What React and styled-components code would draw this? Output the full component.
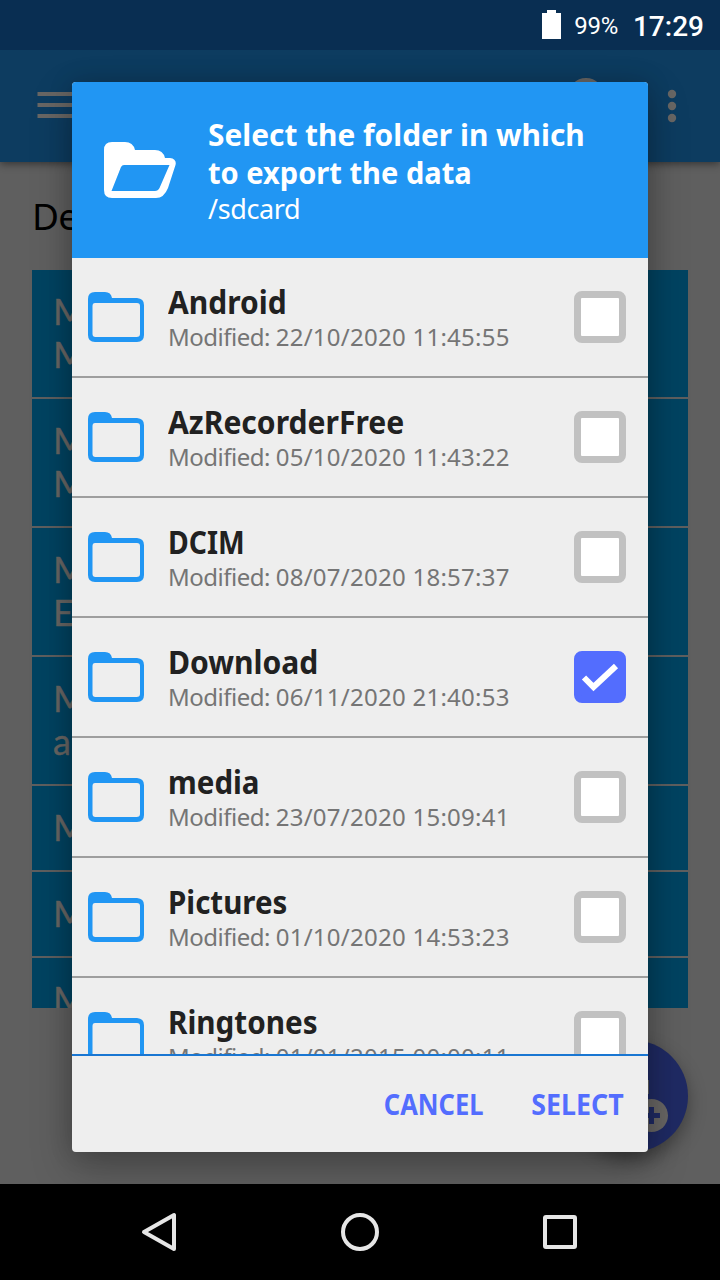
import React from 'react';
import styled, { createGlobalStyle } from 'styled-components';

const GlobalStyle = createGlobalStyle`
  * { box-sizing: border-box; }
  body { margin: 0; background: #000; }
`;

const Screen = styled.div`
  position: relative;
  display: flex;
  flex-direction: column;
  width: 720px;
  height: 1280px;
  overflow: hidden;
  background: #5f5f5f;
  font-family: 'Noto Sans', 'Open Sans', sans-serif;
`;

const StatusBar = styled.header`
  position: relative;
  display: flex;
  flex: none;
  align-items: center;
  justify-content: flex-end;
  height: 50px;
  padding: 2px 16px 0 0;
  background: #092e52;
  color: #fff;
  font-family: Roboto, sans-serif;
`;

const BatteryIcon = styled.svg`
  margin: -3px 13px 0 0;
`;

const BatteryLevel = styled.span`
  margin-right: 15px;
  font-size: 24px;
  letter-spacing: -0.3px;
`;

const Clock = styled.span`
  font-size: 28px;
  font-weight: 500;
`;

const AppBar = styled.div`
  display: flex;
  flex: none;
  align-items: center;
  height: 112px;
  padding: 0 43px 0 37px;
  background: #0d3c60;
  box-shadow: 0 2px 8px rgba(0, 0, 0, 0.45);
`;

const MenuIcon = styled.svg`
  margin-bottom: 2px;
`;

const SearchIcon = styled.svg`
  margin-left: auto;
  margin-right: 63px;
`;

const Page = styled.main`
  flex: 1;
  min-height: 0;
  padding: 30px 32px 0;
`;

const PageTitle = styled.h1`
  height: 78px;
  margin: 0;
  color: #000;
  font-size: 37px;
  font-weight: 400;
  line-height: 47px;
  letter-spacing: -0.8px;
`;

const EntryList = styled.div`
  height: 738px;
  overflow: hidden;
  background: #004361;
`;

const Entry = styled.div`
  padding: 20px 20px 21px 21px;
  border-bottom: 2px solid #5f5f5f;
  color: #686664;
  font-family: Lato, 'Noto Sans', sans-serif;
  font-size: 36px;
  line-height: 43px;
  -webkit-text-stroke: 0.4px #686664;
`;

const Line = styled.div`
  height: 43px;
`;

const Fab = styled.div`
  position: absolute;
  right: 32px;
  bottom: 128px;
  width: 112px;
  height: 112px;
  border-radius: 50%;
  background: #1f2a63;
  box-shadow: 0 8px 18px rgba(0, 0, 0, 0.35);
`;

const NavBar = styled.nav`
  position: relative;
  display: flex;
  flex: none;
  align-items: center;
  justify-content: space-between;
  height: 96px;
  padding: 0 140px;
  background: #000;
`;

const Dialog = styled.section`
  position: absolute;
  top: 82px;
  left: 72px;
  display: flex;
  flex-direction: column;
  width: 576px;
  height: 1070px;
  overflow: hidden;
  border-radius: 4px;
  background: #eee;
`;

const DialogShadow = styled.div`
  position: absolute;
  top: 82px;
  left: 72px;
  width: 576px;
  height: 1070px;
  border-radius: 4px;
  box-shadow: 0 16px 40px rgba(0, 0, 0, 0.26), 0 0 24px rgba(0, 0, 0, 0.16);
`;

const DialogHeader = styled.div`
  display: flex;
  flex: none;
  height: 176px;
  padding: 33px 32px 0;
  background: #2196f3;
  color: #fff;
`;

const OpenFolder = styled.svg`
  flex: none;
  margin: 27px 32px 0 0;
`;

const DialogTitle = styled.h2`
  margin: 0;
  font-size: 31px;
  font-weight: 700;
  line-height: 38px;
  white-space: nowrap;
`;

const TitleLine = styled.span`
  display: block;
  transform: scaleX(${(p) => p.$stretch});
  transform-origin: left;
`;

const Path = styled.div`
  font-size: 27px;
  line-height: 36px;
  letter-spacing: -0.4px;
`;

const FolderList = styled.div`
  flex: none;
  height: 796px;
  overflow: hidden;
`;

const FolderRow = styled.div`
  display: flex;
  align-items: center;
  height: 120px;
  padding: 0 22px 0 16px;
  border-bottom: 2px solid #9e9e9e;
`;

const FolderText = styled.div`
  flex: 1;
  padding-top: 2px;
  margin-left: 24px;
  white-space: nowrap;
`;

const FolderName = styled.div`
  color: #212121;
  font-size: 32px;
  font-weight: 700;
  line-height: 38px;
  transform: scaleX(${(p) => p.$stretch});
  transform-origin: left;
`;

const Modified = styled.div`
  color: #757575;
  font-size: 24px;
  line-height: 32px;
`;

const ModifiedLabel = styled.span`
  letter-spacing: -0.5px;
`;

const ModifiedDate = styled.span`
  letter-spacing: 0.26px;
`;

const Checkbox = styled.span`
  display: grid;
  flex: none;
  place-items: center;
  width: 52px;
  height: 52px;
  border: 7px solid ${(p) => (p.$checked ? '#536dfe' : '#c1c1c1')};
  border-radius: 8px;
  background: ${(p) => (p.$checked ? '#536dfe' : '#fff')};
`;

const DialogFooter = styled.footer`
  display: flex;
  flex: none;
  align-items: center;
  justify-content: flex-end;
  gap: 44px;
  height: 98px;
  padding-right: 24px;
  border-top: 2px solid #1976d2;
`;

const TextButton = styled.button`
  padding: 0;
  border: 0;
  background: none;
  color: #536dfe;
  font: 700 28px 'Noto Sans', sans-serif;
  transform: scaleX(${(p) => p.$stretch});
  transform-origin: right;
`;

const entries = [['M', 'M'], ['M', 'M'], ['M', 'E'], ['M', 'a'], ['M'], ['M'], ['M']];

const folders = [
  { name: 'Android', date: '22/10/2020 11:45:55', stretch: 0.937 },
  { name: 'AzRecorderFree', date: '05/10/2020 11:43:22', stretch: 0.94 },
  { name: 'DCIM', date: '08/07/2020 18:57:37', stretch: 0.885 },
  { name: 'Download', date: '06/11/2020 21:40:53', checked: true, stretch: 0.94 },
  { name: 'media', date: '23/07/2020 15:09:41', stretch: 0.922 },
  { name: 'Pictures', date: '01/10/2020 14:53:23', stretch: 0.922 },
  { name: 'Ringtones', date: '01/01/2015 00:00:11', stretch: 0.927 },
];

function FolderIcon() {
  return (
    <svg width="56" height="50" viewBox="0 0 56 50">
      <path
        fill="#2196f3"
        fillRule="evenodd"
        d="M7 0H17Q23 0 24 6H49Q56 6.500 56 13V43Q56 50 49 50H7Q0 50 0 43V7Q0 0 7 0ZM7 11Q4.500 11 4.500 14V42Q4.500 45 7.500 45H48.500Q52 45 52 42V14Q52 11 49 11Z"
      />
    </svg>
  );
}

export default function App() {
  return (
    <Screen>
      <GlobalStyle />
      <StatusBar>
        <BatteryIcon width="19" height="29" viewBox="0 0 19 29">
          <path fill="#fff" d="M5 0h9v3h5v26H0V3h5z" />
        </BatteryIcon>
        <BatteryLevel>99%</BatteryLevel>
        <Clock>17:29</Clock>
      </StatusBar>
      <AppBar>
        <MenuIcon width="54" height="26" viewBox="0 0 54 26">
          <path stroke="#686664" strokeWidth="4" d="M.5 2H54M.5 13H54M.5 24H54" />
        </MenuIcon>
        <SearchIcon width="36" height="56" viewBox="0 0 36 56">
          <circle cx="18" cy="18" r="16" fill="none" stroke="#686664" strokeWidth="4" />
        </SearchIcon>
        <svg width="10" height="34" viewBox="0 0 10 34">
          <g fill="#686664">
            <circle cx="5" cy="5" r="4.200" />
            <circle cx="5" cy="17" r="4.200" />
            <circle cx="5" cy="29" r="4.200" />
          </g>
        </svg>
      </AppBar>
      <Page>
        <PageTitle>De</PageTitle>
        <EntryList>
          {entries.map((lines, i) => (
            <Entry key={i}>
              {lines.map((line, j) => (
                <Line key={j}>{line}</Line>
              ))}
            </Entry>
          ))}
        </EntryList>
      </Page>
      <Fab>
        <svg width="112" height="112" viewBox="0 0 112 112">
          <path fill="#5f5f5f" d="M42 40h31v14H42z" />
          <circle cx="75.500" cy="75.500" r="16.500" fill="#686664" />
          <path stroke="#1f2a63" strokeWidth="5" d="M75.500 67v17M67 75.500h17" />
        </svg>
      </Fab>
      <DialogShadow />
      <NavBar>
        <svg width="40" height="40" viewBox="0 0 40 40">
          <path fill="none" stroke="#e6e6e6" strokeWidth="4" strokeLinejoin="round" d="M34 3V37L4 20Z" />
        </svg>
        <svg width="40" height="40" viewBox="0 0 40 40">
          <circle cx="20" cy="20" r="17" fill="none" stroke="#e6e6e6" strokeWidth="4" />
        </svg>
        <svg width="40" height="40" viewBox="0 0 40 40">
          <rect x="5" y="5" width="30" height="30" rx="1" fill="none" stroke="#e6e6e6" strokeWidth="4" />
        </svg>
      </NavBar>
      <Dialog>
        <DialogHeader>
          <OpenFolder width="72" height="56" viewBox="0 0 72 56">
            <path
              fill="#fff"
              fillRule="evenodd"
              d="M8 0H21Q29 0 31 8H51Q59 8 61 16H66Q73 17 71.500 23L64 46Q60 56 52 56H8Q0 56 0 48V8Q0 0 8 0ZM20 23Q18 23 17 25L7.500 49H51Q54 49 55.500 46L65.500 23Z"
            />
          </OpenFolder>
          <div>
            <DialogTitle>
              <TitleLine $stretch={0.963}>Select the folder in which</TitleLine>
              <TitleLine $stretch={0.937}>to export the data</TitleLine>
            </DialogTitle>
            <Path>/sdcard</Path>
          </div>
        </DialogHeader>
        <FolderList>
          {folders.map((f) => (
            <FolderRow key={f.name}>
              <FolderIcon />
              <FolderText>
                <FolderName $stretch={f.stretch}>{f.name}</FolderName>
                <Modified>
                  <ModifiedLabel>Modified: </ModifiedLabel>
                  <ModifiedDate>{f.date}</ModifiedDate>
                </Modified>
              </FolderText>
              <Checkbox $checked={f.checked}>
                {f.checked && (
                  <svg width="38" height="38" viewBox="0 0 38 38">
                    <path fill="none" stroke="#fff" strokeWidth="6" d="M3 19.500L12.500 29L35 8" />
                  </svg>
                )}
              </Checkbox>
            </FolderRow>
          ))}
        </FolderList>
        <DialogFooter>
          <TextButton $stretch={0.91}>CANCEL</TextButton>
          <TextButton $stretch={0.955}>SELECT</TextButton>
        </DialogFooter>
      </Dialog>
    </Screen>
  );
}
